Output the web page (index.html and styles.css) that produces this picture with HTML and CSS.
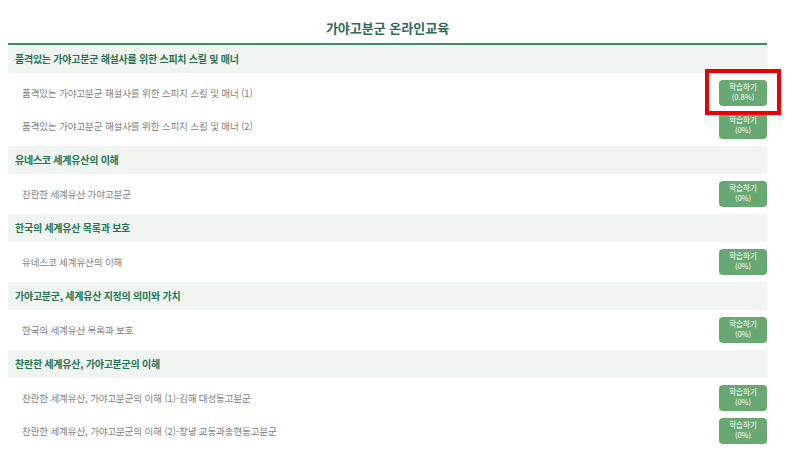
FILE: index.html
```html
<!DOCTYPE html>
<html lang="ko">
<head>
<meta charset="utf-8">
<link rel="stylesheet" href="styles.css">
</head>
<body>
<div class="wrap">
  <h1 class="title">가야고분군 온라인교육</h1>

  <section class="group">
    <div class="group-head">품격있는 가야고분군 해설사를 위한 스피치 스킬 및 매너</div>
    <ul class="items">
      <li class="item"><span class="item-name">품격있는 가야고분군 해설사를 위한 스피치 스킬 및 매너 (1)</span><a class="btn">학습하기<br>(0.8%)</a></li>
      <li class="item"><span class="item-name">품격있는 가야고분군 해설사를 위한 스피치 스킬 및 매너 (2)</span><a class="btn">학습하기<br>(0%)</a></li>
    </ul>
  </section>

  <section class="group">
    <div class="group-head">유네스코 세계유산의 이해</div>
    <ul class="items">
      <li class="item"><span class="item-name">찬란한 세계유산 가야고분군</span><a class="btn">학습하기<br>(0%)</a></li>
    </ul>
  </section>

  <section class="group">
    <div class="group-head">한국의 세계유산 목록과 보호</div>
    <ul class="items">
      <li class="item"><span class="item-name">유네스코 세계유산의 이해</span><a class="btn">학습하기<br>(0%)</a></li>
    </ul>
  </section>

  <section class="group">
    <div class="group-head">가야고분군, 세계유산 지정의 의미와 가치</div>
    <ul class="items">
      <li class="item"><span class="item-name">한국의 세계유산 목록과 보호</span><a class="btn">학습하기<br>(0%)</a></li>
    </ul>
  </section>

  <section class="group">
    <div class="group-head">찬란한 세계유산, 가야고분군의 이해</div>
    <ul class="items">
      <li class="item"><span class="item-name">찬란한 세계유산, 가야고분군의 이해 (1)-김해 대성동고분군</span><a class="btn">학습하기<br>(0%)</a></li>
      <li class="item"><span class="item-name">찬란한 세계유산, 가야고분군의 이해 (2)-창녕 교동과송현동고분군</span><a class="btn">학습하기<br>(0%)</a></li>
    </ul>
  </section>
</div>
<div class="highlight"></div>
</body>
</html>
```

FILE: styles.css
```css
* { box-sizing: border-box; }
html, body { margin: 0; padding: 0; background: #fff; }
body {
  font-family: "Noto Sans CJK KR", "Noto Sans", sans-serif;
  overflow: hidden;
  position: relative;
}
.wrap {
  margin-left: 8px;
  width: 759px;
}
.title {
  margin: 0;
  padding-top: 14px;
  height: 45px;
  line-height: 28px;
  text-align: center;
  font-size: 13px;
  font-weight: 700;
  color: #2b6b57;
  border-bottom: 2px solid #3f8c6c;
}
.group-head {
  height: 28px;
  line-height: 28px;
  padding-left: 7px;
  background: #f0f5f2;
  color: #1f7350;
  font-size: 10px;
  font-weight: 700;
  letter-spacing: -0.25px;
}
.items {
  list-style: none;
  margin: 0;
  padding: 0 0 7px 0;
}
.item {
  height: 33px;
  padding-top: 7px;
  display: flex;
  justify-content: space-between;
  align-items: flex-start;
}
.item-name {
  padding-left: 14px;
  line-height: 26px;
  font-size: 9.5px;
  color: #808080;
  letter-spacing: -0.1px;
}
.btn {
  width: 48px;
  height: 26px;
  padding-top: 2px;
  border-radius: 4px;
  background: #68a873;
  color: #fff;
  font-size: 7.5px;
  line-height: 10px;
  text-align: center;
}
.highlight {
  position: absolute;
  left: 705px;
  top: 69px;
  width: 76px;
  height: 46px;
  border: 4px solid #ee0000;
}
```
